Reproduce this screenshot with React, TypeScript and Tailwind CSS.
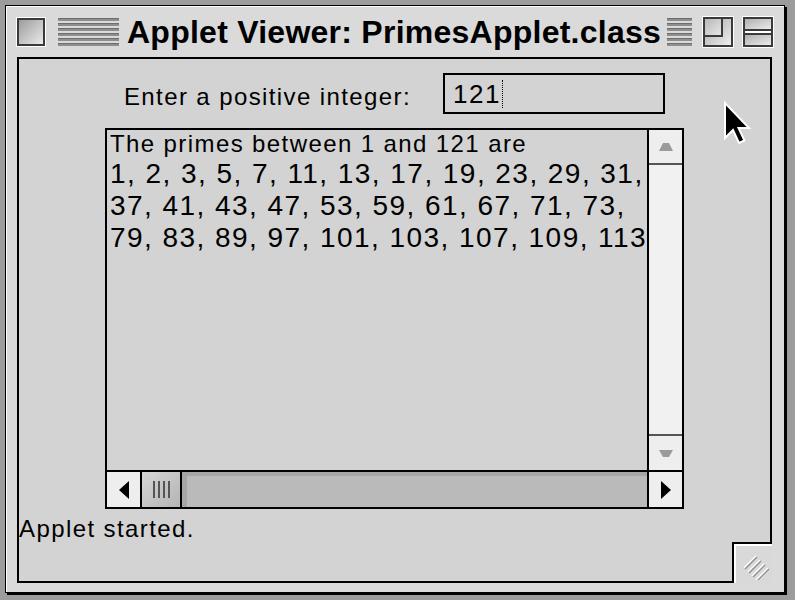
import React from "react";

const font = { fontFamily: '"Liberation Sans", Arial, sans-serif' };

const Stripes = ({ className }: { className: string }) => (
  <div className={`flex flex-col gap-[2px] ${className}`}>
    {[0, 1, 2, 3, 4, 5].map((i) => (
      <div key={i} className="h-[3px] bg-[#8e8e8e] border-t border-[#6e6e6e]" />
    ))}
  </div>
);

const TitleBar = () => (
  <div className="flex h-[51px] items-center pl-[11px]">
    <div className="h-[28px] w-[28px] border-2 border-[#3a3a3a] bg-gradient-to-br from-[#9c9c9c] to-[#ececec] outline outline-1 outline-white" />
    <Stripes className="ml-[13px] w-[61px]" />
    <span
      className="ml-[8px] w-[534px] whitespace-nowrap text-[32px] font-bold leading-none tracking-[0.25px] text-black"
      style={font}
    >
      Applet Viewer: PrimesApplet.class
    </span>
    <Stripes className="ml-[6px] w-[25px]" />
    <div className="ml-[11px] relative h-[30px] w-[30px] border-2 border-[#3a3a3a] bg-gradient-to-br from-[#a8a8a8] to-[#efefef] outline outline-1 outline-white">
      <div className="absolute left-0 top-0 h-[18px] w-[18px] border-b-2 border-r-2 border-[#3a3a3a] bg-gradient-to-br from-[#b8b8b8] to-[#e6e6e6]" />
    </div>
    <div className="ml-[10px] flex h-[30px] w-[30px] flex-col border-2 border-[#3a3a3a] outline outline-1 outline-white">
      <div className="flex-1 border-b-2 border-[#3a3a3a] bg-gradient-to-br from-[#b0b0b0] to-[#ececec]" />
      <div className="h-[2px] bg-white" />
      <div className="flex-1 border-t-2 border-[#3a3a3a] bg-gradient-to-br from-[#b0b0b0] to-[#ececec]" />
    </div>
  </div>
);

const Arrow = ({ dir, disabled }: { dir: "up" | "down" | "left" | "right"; disabled?: boolean }) => {
  const fill = disabled ? "#9a9a9a" : "#000";
  if (dir === "up")
    return (
      <svg width="14" height="8" viewBox="0 0 14 8">
        <path d="M4 0 H10 L14 8 H0 Z" fill={fill} />
      </svg>
    );
  if (dir === "down")
    return (
      <svg width="14" height="7" viewBox="0 0 14 7">
        <path d="M0 0 H14 L10 7 H4 Z" fill={fill} />
      </svg>
    );
  if (dir === "left")
    return (
      <svg width="10" height="18" viewBox="0 0 10 18">
        <path d="M10 0 V18 L0 9 Z" fill={fill} />
      </svg>
    );
  return (
    <svg width="10" height="18" viewBox="0 0 10 18">
      <path d="M0 0 V18 L10 9 Z" fill={fill} />
    </svg>
  );
};

const primesLines = [
  "1, 2, 3, 5, 7, 11, 13, 17, 19, 23, 29, 31,",
  "37, 41, 43, 47, 53, 59, 61, 67, 71, 73,",
  "79, 83, 89, 97, 101, 103, 107, 109, 113",
];

const TextArea = () => (
  <div className="mt-[14px] flex h-[381px] w-[579px] flex-col border-2 border-black bg-[#d3d3d3]">
    <div className="flex flex-1 min-h-0">
      <div className="flex-1 overflow-hidden whitespace-nowrap pl-[3px] text-black" style={font}>
        <div className="text-[24px] leading-[28px] tracking-[1.4px]">The primes between 1 and 121 are</div>
        {primesLines.map((line) => (
          <div key={line} className="text-[28px] leading-[32px] tracking-[1.45px]">
            {line}
          </div>
        ))}
      </div>
      <div className="flex w-[35px] flex-col border-l-2 border-black bg-[#f1f1f1]">
        <div className="flex h-[35px] items-center justify-center border-b-2 border-[#555] bg-[#eeeeee]">
          <Arrow dir="up" disabled />
        </div>
        <div className="flex-1" />
        <div className="flex h-[36px] items-center justify-center border-t-2 border-[#555] bg-[#eeeeee]">
          <Arrow dir="down" disabled />
        </div>
      </div>
    </div>
    <div className="flex h-[37px] border-t-2 border-black">
      <div className="flex w-[35px] items-center justify-center border-r-2 border-black bg-[#eeeeee]">
        <Arrow dir="left" />
      </div>
      <div className="flex w-[40px] items-center justify-center gap-[3px] border-r-2 border-black bg-gradient-to-br from-[#d6d6d6] to-[#b4b4b4]">
        {[0, 1, 2, 3].map((i) => (
          <div key={i} className="h-[17px] w-[2px] bg-[#555]" />
        ))}
      </div>
      <div className="flex-1 bg-[#bababa] shadow-[inset_5px_4px_0_#a6a6a6]" />
      <div className="flex w-[35px] items-center justify-center border-l-2 border-black bg-[#eeeeee]">
        <Arrow dir="right" />
      </div>
    </div>
  </div>
);

const GrowBox = () => (
  <div className="absolute bottom-[-2px] right-[-2px] h-[41px] w-[40px] border-l-2 border-t-2 border-black bg-[#d9d9d9] shadow-[inset_2px_2px_0_#fff]">
    <svg className="absolute left-[8px] top-[8px]" width="28" height="28" viewBox="0 0 28 28">
      {[0, 1, 2, 3].map((k) => (
        <g key={k}>
          <line x1={2 + 4 * k} y1={16 + 4 * k} x2={14 + 4 * k} y2={4 + 4 * k} stroke="#fff" strokeWidth="1.5" />
          <line x1={3 + 4 * k} y1={17 + 4 * k} x2={15 + 4 * k} y2={5 + 4 * k} stroke="#8a8a8a" strokeWidth="1.2" />
        </g>
      ))}
    </svg>
  </div>
);

const Cursor = () => (
  <svg className="absolute left-[720px] top-[98px]" width="34" height="48" viewBox="0 0 13.6 19.2">
    <path d="M2 2 V16 L5.2 12.8 L7.6 18 L9.8 17 L7.4 12 H11.6 Z" fill="#000" stroke="#fff" strokeWidth="0.8" />
  </svg>
);

export default function App() {
  return (
    <div className="relative h-[600px] w-[795px] overflow-hidden bg-[#9c9c9c] p-[5px]">
      <div className="flex h-[588px] w-[780px] flex-col border border-black bg-[#dadada] pb-[9px] shadow-[inset_1px_1px_0_#fff,2px_2px_0_#000]">
        <TitleBar />
        <div className="relative ml-[11px] flex h-[526px] w-[755px] flex-col items-center border-2 border-black bg-[#d3d3d3]">
          <div className="mt-[14px] flex items-start gap-[32px]">
            <span className="mt-[10px] whitespace-nowrap text-[24px] leading-[28px] tracking-[1.4px] text-black" style={font}>
              Enter a positive integer:
            </span>
            <div className="flex h-[41px] w-[222px] items-center border-2 border-black pl-[8px]" style={font}>
              <span className="text-[26px] leading-none tracking-[1.5px] text-black">121</span>
              <span className="ml-[1px] h-[28px] border-l border-dotted border-black" />
            </div>
          </div>
          <TextArea />
          <div
            className="mt-[6px] self-start whitespace-nowrap text-[24px] leading-[28px] tracking-[1.4px] text-black"
            style={font}
          >
            Applet started.
          </div>
          <GrowBox />
        </div>
      </div>
      <Cursor />
    </div>
  );
}
